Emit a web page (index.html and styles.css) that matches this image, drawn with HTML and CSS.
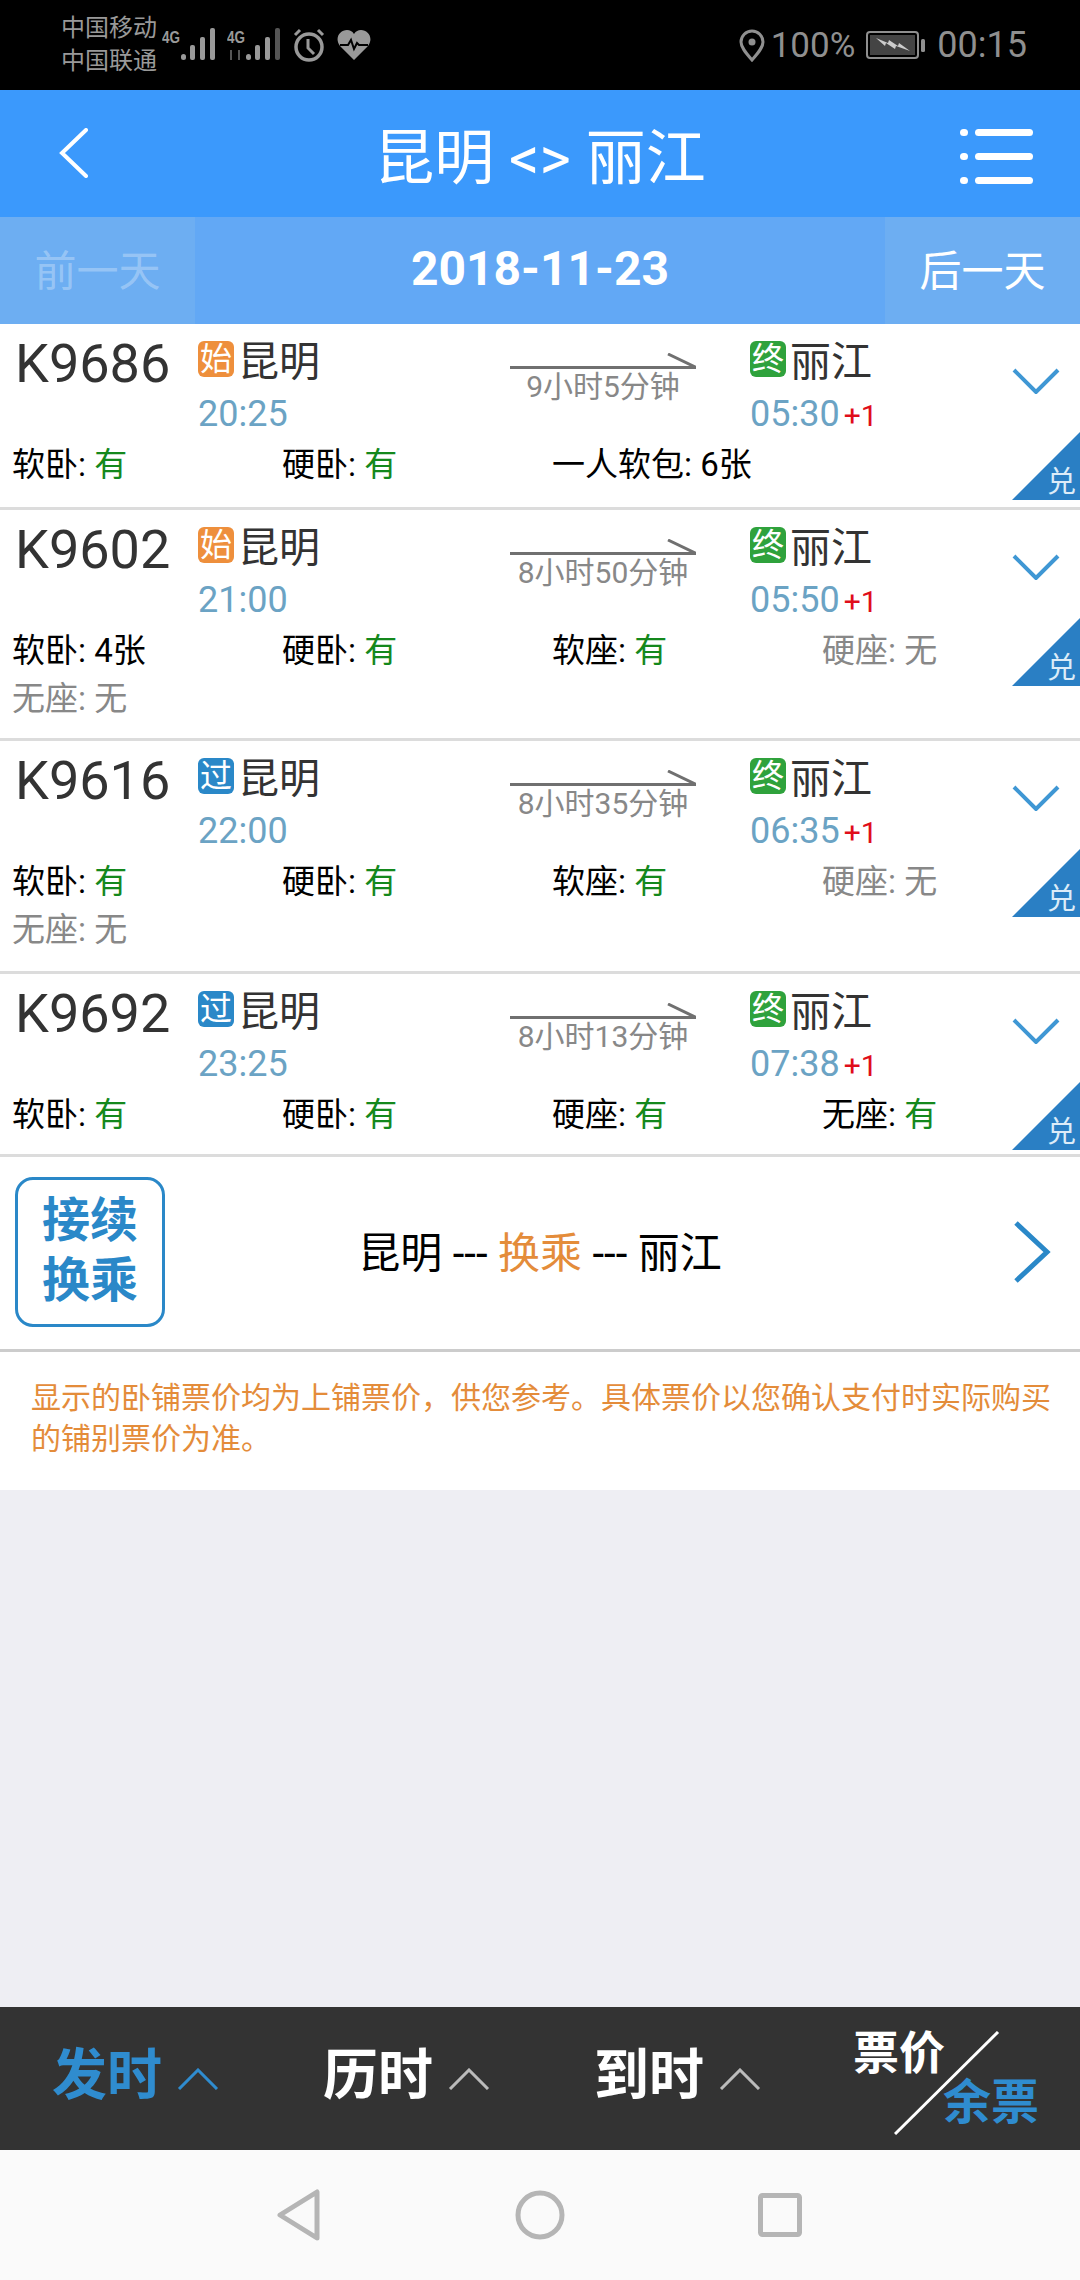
FILE: index.html
```html
<!DOCTYPE html>
<html lang="zh-CN">
<head>
    <meta charset="UTF-8">
    <meta name="viewport" content="width=device-width, initial-scale=1.0">
    <title>昆明 - 丽江</title>
    <link rel="stylesheet" href="styles.css">
</head>
<body>
    <div class="status-bar">
        <div class="carrier">
            <div>中国移动</div>
            <div>中国联通</div>
        </div>
        <svg class="sig sig-a" width="54" height="34" viewBox="0 0 54 34">
            <text x="0" y="16" class="sig-text" textLength="18" lengthAdjust="spacingAndGlyphs">4G</text>
            <rect x="19" y="27" width="5" height="6" rx="2.5" fill="#999"/>
            <rect x="28" y="18" width="5" height="15" rx="2" fill="#999"/>
            <rect x="38" y="10" width="5" height="23" rx="2" fill="#999"/>
            <rect x="48" y="1" width="5" height="32" rx="2" fill="#999"/>
        </svg>
        <svg class="sig sig-b" width="54" height="34" viewBox="0 0 54 34">
            <text x="0" y="16" class="sig-text" textLength="18" lengthAdjust="spacingAndGlyphs">4G</text>
            <path d="M4 33V23M12 33V23" stroke="#555" stroke-width="2"/>
            <rect x="19" y="27" width="5" height="6" rx="2.5" fill="#999"/>
            <rect x="28" y="18" width="5" height="15" rx="2" fill="#999"/>
            <rect x="38" y="10" width="5" height="23" rx="2" fill="#999"/>
            <rect x="48" y="1" width="5" height="32" rx="2" fill="#555"/>
        </svg>
        <svg class="alarm" width="32" height="34" viewBox="0 0 32 34">
            <circle cx="16" cy="19" r="13" fill="none" stroke="#999" stroke-width="3.5"/>
            <path d="M15 11v9l6 6" fill="none" stroke="#999" stroke-width="3"/>
            <path d="M2 7l5-5M30 7l-5-5" stroke="#999" stroke-width="3"/>
        </svg>
        <svg class="heart" width="34" height="30" viewBox="0 0 34 30">
            <path d="M17 30L3 16C-3 8 3 0 10 0c3 0 5 1 7 4 2-3 4-4 7-4 7 0 13 8 7 16z" fill="#999"/>
            <path d="M3 15h8l3-5 3 9 3-6 2 2h9" fill="none" stroke="#000" stroke-width="2"/>
        </svg>
        <div class="status-right">
            <svg width="26" height="33" viewBox="0 0 26 33">
                <path d="M13 31C6 23 2 18 2 13a11 11 0 0 1 22 0c0 5-4 10-11 18z" fill="none" stroke="#8f8f8f" stroke-width="3"/>
                <circle cx="13" cy="13" r="3.5" fill="#8f8f8f"/>
            </svg>
            <span class="pct">100%</span>
            <svg class="battery" width="60" height="28" viewBox="0 0 60 28">
                <rect x="1" y="1" width="51" height="26" rx="3" fill="none" stroke="#8f8f8f" stroke-width="2"/>
                <rect x="4" y="4" width="45" height="20" fill="#444"/>
                <path d="M10 7l12 5 1-3 9 6 1-3 11 8-14-5-1 3-9-6-1 3z" fill="#ccc"/>
                <rect x="55" y="8" width="4" height="13" rx="1.5" fill="#8f8f8f"/>
            </svg>
            <span class="clock">00:15</span>
        </div>
    </div>

    <div class="nav">
        <svg class="nav-back" width="30" height="50" viewBox="0 0 30 50">
            <path d="M28 2L4 25l24 23" fill="none" stroke="white" stroke-width="4" stroke-linecap="round"/>
        </svg>
        <div class="nav-title">昆明 &lt;&gt; 丽江</div>
        <div class="nav-menu">
            <i></i><b></b>
            <i></i><b></b>
            <i></i><b></b>
        </div>
    </div>

    <div class="date-bar">
        <div class="day-btn day-off">前一天</div>
        <div class="date">2018-11-23</div>
        <div class="day-btn">后一天</div>
    </div>

    <div class="train train-first">
        <div class="train-top">
            <div class="code">K9686</div>
            <div class="stop stop-from">
                <div class="stop-name"><span class="tag tag-start">始</span>昆明</div>
                <div class="time">20:25</div>
            </div>
            <div class="dur">
                <svg class="dur-arrow" width="186" height="16" viewBox="0 0 186 16">
                    <path d="M0 14.5h186L158 1" fill="none" stroke="#707070" stroke-width="3"/>
                </svg>
                <div class="dur-text">9小时5分钟</div>
            </div>
            <div class="stop stop-to">
                <div class="stop-name"><span class="tag tag-end">终</span>丽江</div>
                <div class="time">05:30<span class="plus">+1</span></div>
            </div>
            <svg class="more" width="48" height="26" viewBox="0 0 48 26">
                <path d="M2 2l22 22L46 2" fill="none" stroke="#3f97d4" stroke-width="4"/>
            </svg>
        </div>
        <div class="seats">
            <div>软卧: <span class="yes">有</span></div>
            <div>硬卧: <span class="yes">有</span></div>
            <div>一人软包: 6张</div>
        </div>
        <div class="swap"><span>兑</span></div>
    </div>

    <div class="train">
        <div class="train-top">
            <div class="code">K9602</div>
            <div class="stop stop-from">
                <div class="stop-name"><span class="tag tag-start">始</span>昆明</div>
                <div class="time">21:00</div>
            </div>
            <div class="dur">
                <svg class="dur-arrow" width="186" height="16" viewBox="0 0 186 16">
                    <path d="M0 14.5h186L158 1" fill="none" stroke="#707070" stroke-width="3"/>
                </svg>
                <div class="dur-text">8小时50分钟</div>
            </div>
            <div class="stop stop-to">
                <div class="stop-name"><span class="tag tag-end">终</span>丽江</div>
                <div class="time">05:50<span class="plus">+1</span></div>
            </div>
            <svg class="more" width="48" height="26" viewBox="0 0 48 26">
                <path d="M2 2l22 22L46 2" fill="none" stroke="#3f97d4" stroke-width="4"/>
            </svg>
        </div>
        <div class="seats">
            <div>软卧: 4张</div>
            <div>硬卧: <span class="yes">有</span></div>
            <div>软座: <span class="yes">有</span></div>
            <div class="none">硬座: 无</div>
            <div class="none">无座: 无</div>
        </div>
        <div class="swap"><span>兑</span></div>
    </div>

    <div class="train train-third">
        <div class="train-top">
            <div class="code">K9616</div>
            <div class="stop stop-from">
                <div class="stop-name"><span class="tag tag-pass">过</span>昆明</div>
                <div class="time">22:00</div>
            </div>
            <div class="dur">
                <svg class="dur-arrow" width="186" height="16" viewBox="0 0 186 16">
                    <path d="M0 14.5h186L158 1" fill="none" stroke="#707070" stroke-width="3"/>
                </svg>
                <div class="dur-text">8小时35分钟</div>
            </div>
            <div class="stop stop-to">
                <div class="stop-name"><span class="tag tag-end">终</span>丽江</div>
                <div class="time">06:35<span class="plus">+1</span></div>
            </div>
            <svg class="more" width="48" height="26" viewBox="0 0 48 26">
                <path d="M2 2l22 22L46 2" fill="none" stroke="#3f97d4" stroke-width="4"/>
            </svg>
        </div>
        <div class="seats">
            <div>软卧: <span class="yes">有</span></div>
            <div>硬卧: <span class="yes">有</span></div>
            <div>软座: <span class="yes">有</span></div>
            <div class="none">硬座: 无</div>
            <div class="none">无座: 无</div>
        </div>
        <div class="swap"><span>兑</span></div>
    </div>

    <div class="train">
        <div class="train-top">
            <div class="code">K9692</div>
            <div class="stop stop-from">
                <div class="stop-name"><span class="tag tag-pass">过</span>昆明</div>
                <div class="time">23:25</div>
            </div>
            <div class="dur">
                <svg class="dur-arrow" width="186" height="16" viewBox="0 0 186 16">
                    <path d="M0 14.5h186L158 1" fill="none" stroke="#707070" stroke-width="3"/>
                </svg>
                <div class="dur-text">8小时13分钟</div>
            </div>
            <div class="stop stop-to">
                <div class="stop-name"><span class="tag tag-end">终</span>丽江</div>
                <div class="time">07:38<span class="plus">+1</span></div>
            </div>
            <svg class="more" width="48" height="26" viewBox="0 0 48 26">
                <path d="M2 2l22 22L46 2" fill="none" stroke="#3f97d4" stroke-width="4"/>
            </svg>
        </div>
        <div class="seats">
            <div>软卧: <span class="yes">有</span></div>
            <div>硬卧: <span class="yes">有</span></div>
            <div>硬座: <span class="yes">有</span></div>
            <div>无座: <span class="yes">有</span></div>
        </div>
        <div class="swap"><span>兑</span></div>
    </div>

    <div class="transfer">
        <div class="transfer-box">接续<br>换乘</div>
        <div class="transfer-text">昆明 --- <span class="orange">换乘</span> --- 丽江</div>
        <svg width="38" height="62" viewBox="0 0 38 62">
            <path d="M3 2l31 29L3 60" fill="none" stroke="#2a88c8" stroke-width="5"/>
        </svg>
    </div>

    <div class="notice">显示的卧铺票价均为上铺票价，供您参考。具体票价以您确认支付时实际购买的铺别票价为准。</div>

    <div class="spacer"></div>

    <div class="sort-bar">
        <div class="sort sort-on">发时
            <svg width="42" height="22" viewBox="0 0 42 22"><path d="M2 21L21 2l19 19" fill="none" stroke="#2f8ccf" stroke-width="3"/></svg>
        </div>
        <div class="sort">历时
            <svg width="42" height="22" viewBox="0 0 42 22"><path d="M2 21L21 2l19 19" fill="none" stroke="#bbb" stroke-width="3"/></svg>
        </div>
        <div class="sort">到时
            <svg width="42" height="22" viewBox="0 0 42 22"><path d="M2 21L21 2l19 19" fill="none" stroke="#bbb" stroke-width="3"/></svg>
        </div>
        <div class="price-sort">
            <div>票价</div>
            <div class="price-left">余票</div>
            <svg class="slash" width="106" height="104" viewBox="0 0 106 104"><path d="M104 1L1 103" stroke="white" stroke-width="3"/></svg>
        </div>
    </div>

    <div class="sys-nav">
        <svg width="44" height="52" viewBox="0 0 44 52">
            <path d="M40 3v46L3 26z" fill="none" stroke="#b5b5b5" stroke-width="5" stroke-linejoin="round"/>
        </svg>
        <svg class="sys-home" width="50" height="50" viewBox="0 0 50 50">
            <circle cx="25" cy="25" r="22" fill="none" stroke="#b5b5b5" stroke-width="5"/>
        </svg>
        <svg class="sys-recent" width="44" height="44" viewBox="0 0 44 44">
            <rect x="2.5" y="2.5" width="39" height="39" rx="2" fill="none" stroke="#b5b5b5" stroke-width="5"/>
        </svg>
    </div>
</body>
</html>
```

FILE: styles.css
```css
* {
    box-sizing: border-box;
}
html, body {
    margin: 0;
    padding: 0;
}
body {
    width: 1080px;
    height: 2280px;
    display: flex;
    flex-direction: column;
    background: #eeeef3;
    font-family: Roboto, "Noto Sans CJK SC", sans-serif;
    overflow: hidden;
}

/* status bar */
.status-bar {
    height: 90px;
    flex: none;
    background: black;
    color: #999;
    display: flex;
    align-items: center;
    padding-left: 61px;
}
.carrier {
    width: 101px;
    font-size: 24px;
    line-height: 33px;
}
.sig-text {
    font-family: "Liberation Sans", sans-serif;
    font-size: 17px;
    font-weight: bold;
    fill: #999;
}
.sig {
    margin-top: -3px;
}
.sig-b {
    margin-left: 11px;
}
.alarm {
    margin-left: 12px;
}
.heart {
    margin-left: 12px;
}
.status-right {
    margin-left: auto;
    padding-right: 53px;
    display: flex;
    align-items: center;
    color: #8f8f8f;
    font-size: 35px;
}
.pct {
    margin-left: 6px;
}
.battery {
    margin-left: 11px;
}
.clock {
    margin-left: 11px;
    font-size: 36px;
}

/* title */
.nav {
    height: 127px;
    flex: none;
    background: #3b99fc;
    color: white;
    position: relative;
    display: flex;
    align-items: center;
    justify-content: center;
}
.nav-back {
    position: absolute;
    left: 58px;
    top: 38px;
}
.nav-title {
    font-size: 60px;
    margin-top: -3px;
}
.nav-menu {
    position: absolute;
    left: 960px;
    top: 39px;
    display: grid;
    grid-template-columns: 8px 58px;
    column-gap: 7px;
    row-gap: 17px;
}
.nav-menu i {
    height: 7px;
    background: white;
    border-radius: 4px;
}
.nav-menu b {
    height: 7px;
    background: white;
    border-radius: 4px;
}

/* date */
.date-bar {
    height: 107px;
    flex: none;
    background: #62a8f5;
    color: white;
    display: flex;
    align-items: center;
}
.day-btn {
    width: 195px;
    height: 100%;
    background: #6daef2;
    font-size: 42px;
    padding-bottom: 6px;
    display: flex;
    align-items: center;
    justify-content: center;
}
.day-off {
    color: rgba(255, 255, 255, 0.3);
}
.date {
    flex: 1;
    text-align: center;
    font-size: 48px;
    font-weight: bold;
    margin-top: -5px;
}

/* train rows */
.train {
    flex: none;
    position: relative;
    background: white;
    padding-bottom: 15px;
    border-bottom: 3px solid #dcdcdc;
}
.train-first {
    padding-bottom: 18px;
}
.train-third {
    padding-bottom: 17px;
}
.train-top {
    height: 117px;
    padding-left: 13px;
    display: flex;
}
.code {
    width: 185px;
    padding: 5px 0 0 2px;
    font-size: 54px;
    line-height: 70px;
    color: #333;
}
.stop {
    padding-top: 9px;
}
.stop-from {
    width: 312px;
}
.stop-to {
    width: 262px;
    margin-left: 54px;
}
.stop-name {
    height: 50px;
    display: flex;
    align-items: center;
    font-size: 41px;
    color: #333;
}
.tag {
    width: 36px;
    height: 36px;
    margin-right: 4px;
    margin-top: 2px;
    border-radius: 6px;
    color: white;
    font-size: 32px;
    line-height: 36px;
    text-align: center;
}
.tag-start {
    background: #ee8f3c;
}
.tag-end {
    background: #2fa23c;
}
.tag-pass {
    background: #2a88c8;
}
.time {
    margin-top: 4px;
    font-size: 36px;
    line-height: 54px;
    color: #6ba3c4;
}
.plus {
    margin-left: 4px;
    font-size: 30px;
    color: #e00d1a;
}
.dur {
    width: 186px;
    padding-top: 29px;
}
.dur-arrow {
    display: block;
}
.dur-text {
    margin-top: 1px;
    text-align: center;
    font-size: 30px;
    line-height: 34px;
    color: #888;
}
.more {
    margin-top: 44px;
}
.seats {
    padding-left: 12px;
    display: grid;
    grid-template-columns: repeat(4, 270px);
    font-size: 33px;
    line-height: 48px;
    color: black;
}
.yes {
    color: #14881c;
}
.none {
    color: #888;
}
.swap {
    position: absolute;
    right: 0;
    top: 108px;
    width: 68px;
    height: 68px;
    background: #2a7fc4;
    clip-path: polygon(100% 0, 100% 100%, 0 100%);
}
.swap span {
    position: absolute;
    right: 4px;
    bottom: 2px;
    font-size: 29px;
    line-height: 32px;
    color: #dcecf8;
}

/* transfer */
.transfer {
    height: 195px;
    flex: none;
    background: white;
    border-bottom: 3px solid #ccc;
    padding: 0 29px 0 15px;
    display: flex;
    align-items: center;
}
.transfer-box {
    width: 150px;
    height: 150px;
    margin-top: -2px;
    border: 3px solid #2a88c8;
    border-radius: 18px;
    color: #2a88c8;
    font-size: 48px;
    font-weight: bold;
    line-height: 60px;
    text-align: center;
    padding-top: 11px;
}
.transfer-text {
    flex: 1;
    text-align: center;
    font-size: 42px;
    color: black;
    padding-right: 98px;
    margin-top: -8px;
}
.orange {
    color: #e48c3a;
}
.transfer svg {
    margin-top: -2px;
}

/* notice */
.notice {
    flex: none;
    height: 138px;
    background: white;
    padding: 25px 20px 0 31px;
    font-size: 30px;
    line-height: 41px;
    color: #e48c3a;
}
.spacer {
    flex: 1;
}

/* sort bar */
.sort-bar {
    height: 143px;
    flex: none;
    background: #333;
    color: white;
    display: flex;
    align-items: center;
    padding-left: 52px;
}
.sort {
    width: 271px;
    display: flex;
    align-items: center;
    font-size: 55px;
    font-weight: bold;
    margin-top: -17px;
}
.sort svg {
    margin-left: 15px;
    margin-top: 18px;
}
.sort-on {
    color: #2f8ccf;
}
.price-sort {
    position: relative;
    margin-left: -12px;
    width: 186px;
    font-size: 46px;
    font-weight: bold;
    line-height: 50px;
    margin-top: -2px;
}
.price-left {
    color: #2f8ccf;
    font-size: 48px;
    text-align: right;
}
.slash {
    position: absolute;
    left: 41px;
    top: 3px;
}

/* system nav */
.sys-nav {
    height: 130px;
    flex: none;
    background: #fafafa;
    display: flex;
    align-items: center;
    padding-left: 277px;
}
.sys-home {
    margin-left: 194px;
}
.sys-recent {
    margin-left: 193px;
}
```
